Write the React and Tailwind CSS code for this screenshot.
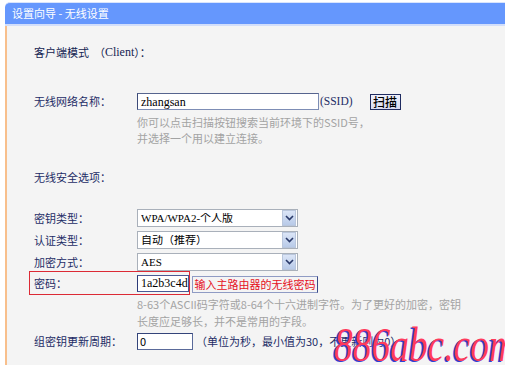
const cn = (...classes) => classes.filter(Boolean).join(' ');

const Chevron = () => (
    <svg width="9" height="6" viewBox="0 0 9 6">
        <path d="M1 1 L4.5 4.5 L8 1" fill="none" stroke="#2a3a6a" strokeWidth="1.6" />
    </svg>
);

const Select = ({ value }) => (
    <div className="flex h-[18px] w-[161px] items-center border border-[#a9b0ba] bg-white pl-[3px]">
        <span className="flex-1 truncate text-[11px] leading-none text-black font-['Liberation_Serif','Noto_Sans_CJK_SC',serif]">
            {value}
        </span>
        <div className="mr-[1px] flex h-[16px] w-[14px] items-center justify-center border border-[#b9c6dc] bg-gradient-to-b from-[#dbe5f7] to-[#b8cae8]">
            <Chevron />
        </div>
    </div>
);

const Label = ({ children, className }) => (
    <div className={cn('w-[103px] shrink-0 text-[11px] leading-none text-[#1d2c66]', className)}>{children}</div>
);

const Hint = ({ children }) => (
    <div className="pl-[103px] text-[11px] leading-[16px] text-[#a3a3a3]">{children}</div>
);

export default function App() {
    return (
        <div className="relative flex h-[365px] w-[505px] flex-col overflow-hidden bg-white pl-[5px] pt-[2px] font-['Noto_Sans_CJK_SC',sans-serif]">
            {/* title bar */}
            <div className="shrink-0 rounded-tl-[5px] border-t border-b-2 border-t-[#d9e4fc] border-b-[#d2defa] bg-[#6597fd]">
                <div className="flex h-[21px] items-center pl-[7px] text-[11px] text-white">设置向导 - 无线设置</div>
            </div>

            {/* panel */}
            <div className="flex flex-1 flex-col border-l-2 border-[#f8bf8c] bg-[#f4f4f4] pl-[27px]">
                <div className="mt-[18px] flex h-[16px] items-center text-[11px] text-[#152452]">
                    客户端模式&nbsp;&nbsp;（<span className="font-['Liberation_Serif',serif] text-[12px]">Client</span>）：
                </div>

                <div className="mt-[33px] flex h-[17px] items-center">
                    <Label>无线网络名称：</Label>
                    <div className="flex h-[17px] w-[182px] items-center border border-[#7d8db5] border-l-[#3c4a78] border-t-[#56648e] bg-white pl-[3px] text-[12px] font-medium text-black font-['Liberation_Serif',serif]">
                        zhangsan
                    </div>
                    <span className="ml-[1px] text-[11.5px] text-[#1d2c66] font-['Liberation_Serif',serif]">(SSID)</span>
                    <button className="ml-[17px] flex h-[16px] w-[31px] items-center justify-center border border-[#1f2b60] bg-gradient-to-b from-[#eef0fb] to-[#d9dcf2] text-[12px] font-medium leading-none text-black">
                        扫描
                    </button>
                </div>

                <div className="mt-[4px]">
                    <Hint>你可以点击扫描按钮搜索当前环境下的SSID号，</Hint>
                    <Hint>并选择一个用以建立连接。</Hint>
                </div>

                <div className="mt-[23px] flex h-[16px] items-center text-[11px] text-[#1d2c66]">无线安全选项：</div>

                <div className="mt-[24px] flex h-[18px] items-center">
                    <Label>密钥类型：</Label>
                    <Select value="WPA/WPA2-个人版" />
                </div>
                <div className="mt-[4px] flex h-[18px] items-center">
                    <Label>认证类型：</Label>
                    <Select value="自动（推荐）" />
                </div>
                <div className="mt-[4px] flex h-[18px] items-center">
                    <Label>加密方式：</Label>
                    <Select value="AES" />
                </div>

                <div className="flex items-center">
                    <div className="-ml-[5px] flex h-[24px] w-[161px] items-center border border-[#dc2a35] pl-[4px]">
                        <Label className="w-[103px]">密码：</Label>
                        <div className="flex h-[17px] w-[52px] items-center border border-[#4a5a96] border-l-[#2c3a78] bg-white pl-[3px] text-[12px] text-black font-['Liberation_Serif',serif]">
                            1a2b3c4d
                        </div>
                    </div>
                    <div className="ml-[2px] mt-[3px] flex h-[17px] w-[126px] items-center justify-center border border-[#8f9bc4] border-r-[#3a4a8a] text-[11px] leading-none text-[#e5101c]">
                        输入主路由器的无线密码
                    </div>
                </div>

                <div className="mt-[1px]">
                    <div className="pl-[103px] text-[11px] leading-[17px] text-[#a3a3a3]">8-63个ASCII码字符或8-64个十六进制字符。为了更好的加密，密钥</div>
                    <div className="pl-[103px] text-[11px] leading-[17px] text-[#a3a3a3]">长度应足够长，并不是常用的字段。</div>
                </div>

                <div className="mt-[3px] flex h-[17px] items-center">
                    <Label>组密钥更新周期：</Label>
                    <div className="flex h-[17px] w-[56px] items-center border border-[#5a6a9a] border-l-[#34447a] border-t-[#34447a] bg-white pl-[2px] text-[11px] text-black">
                        0
                    </div>
                    <span className="ml-[3px] text-[11px] text-[#1d2c66]">（单位为秒，最小值为30，不更新则为0）</span>
                </div>
            </div>

            {/* site watermark */}
            <div className="pointer-events-none absolute left-[334px] top-[321px] origin-left scale-x-[0.78] font-['Liberation_Serif',serif] text-[48px] italic leading-none text-[#ff3b5c] [text-shadow:-2px_1px_0_#2f3fd6]">
                886abc.com
            </div>
        </div>
    );
}
